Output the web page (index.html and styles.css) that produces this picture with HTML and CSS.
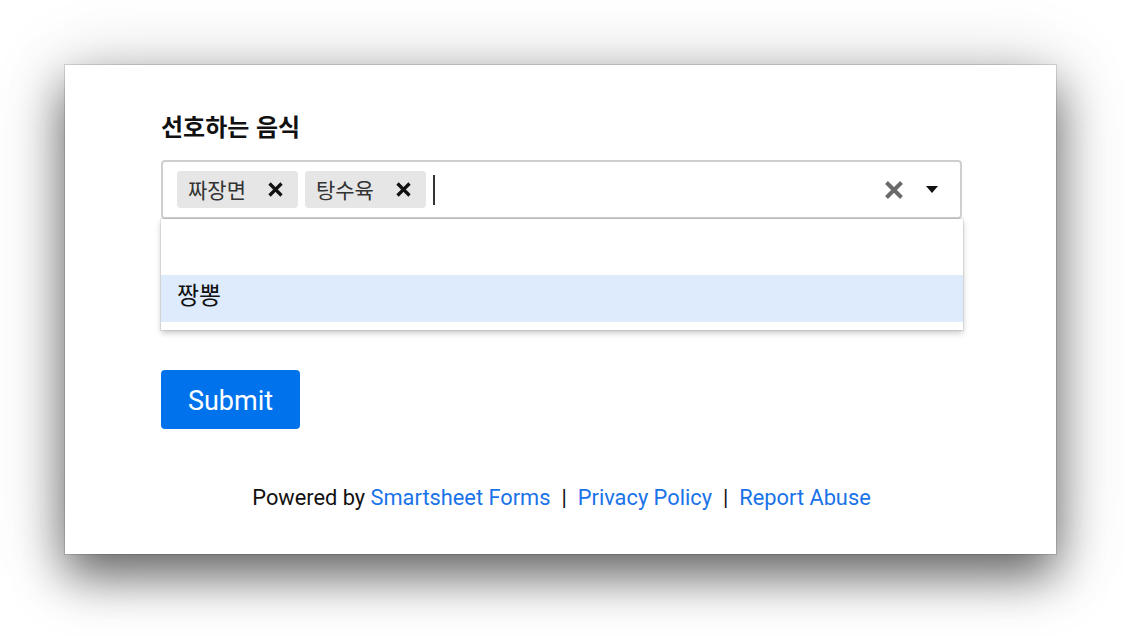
FILE: index.html
```html
<!DOCTYPE html>
<html lang="ko">
<head>
<meta charset="utf-8">
<link rel="stylesheet" href="styles.css">
</head>
<body>
<div class="window">
  <form class="form">
    <label class="label">선호하는 음식</label>
    <div class="select-wrap">
      <div class="select">
        <div class="values">
          <span class="chip"><span class="chip-text">짜장면</span><span class="chip-x">
            <svg width="15" height="15" viewBox="0 0 15 15"><path d="M1.5 1.5L13.5 13.5M13.5 1.5L1.5 13.5" stroke="#111" stroke-width="3.2"/></svg>
          </span></span>
          <span class="chip"><span class="chip-text">탕수육</span><span class="chip-x">
            <svg width="15" height="15" viewBox="0 0 15 15"><path d="M1.5 1.5L13.5 13.5M13.5 1.5L1.5 13.5" stroke="#111" stroke-width="3.2"/></svg>
          </span></span>
          <span class="caret"></span>
        </div>
        <div class="indicators">
          <svg class="clear" width="20" height="20" viewBox="0 0 20 20"><path d="M2.5 2.5L17.5 17.5M17.5 2.5L2.5 17.5" stroke="#6a6a6a" stroke-width="4"/></svg>
          <svg class="arrow" width="12" height="8" viewBox="0 0 12 8"><path d="M0 0H12L6 7Z" fill="#111"/></svg>
        </div>
      </div>
      <div class="menu">
        <div class="option empty"></div>
        <div class="option focused">짱뽕</div>
      </div>
    </div>
    <button type="button" class="submit">Submit</button>
    <p class="footer">Powered by <a href="#">Smartsheet Forms</a><span class="sep">|</span><a href="#">Privacy Policy</a><span class="sep">|</span><a href="#">Report Abuse</a></p>
  </form>
</div>
</body>
</html>
```
FILE: styles.css
```css
html, body {
  margin: 0;
  padding: 0;
  background: #ffffff;
}
body {
  width: 1138px;
  height: 636px;
  overflow: hidden;
  padding-top: 65px;
  box-sizing: border-box;
  font-family: Roboto, "Noto Sans CJK KR", sans-serif;
}
.window {
  margin-left: 65px;
  width: 991px;
  height: 489px;
  background: #fff;
  box-sizing: border-box;
  box-shadow: 0 22px 45px rgba(0,0,0,0.55), 0 4px 70px rgba(0,0,0,0.18), 0 0 0 1px rgba(0,0,0,0.12);
  padding: 46px 94px 0 96px;
}
.form {
  display: flex;
  flex-direction: column;
  margin: 0;
}
.label {
  font-family: "Noto Sans CJK KR", sans-serif;
  font-weight: 700;
  font-size: 24px;
  line-height: 30px;
  color: #111;
  margin-bottom: 19px;
}
.select-wrap {
  position: relative;
}
.select {
  height: 59px;
  box-sizing: border-box;
  border: 2px solid #cfcfcf;
  border-radius: 4px;
  display: flex;
  align-items: center;
  padding: 0 14px;
}
.values {
  flex: 1;
  display: flex;
  align-items: center;
  gap: 7px;
}
.chip {
  display: inline-flex;
  align-items: center;
  height: 37px;
  background: #e6e6e6;
  border-radius: 4px;
  padding: 0 15px 0 11px;
  font-family: "Noto Sans CJK KR", sans-serif;
  font-size: 21px;
  color: #333;
}
.chip-text {
  line-height: 37px;
  margin-right: 22px;
}
.chip-x {
  display: flex;
  align-items: center;
}
.caret {
  width: 2px;
  height: 30px;
  background: #333;
}
.indicators {
  display: flex;
  align-items: center;
  gap: 22px;
  padding-right: 8px;
}
.clear { display: block; }
.arrow { display: block; margin-top: 1px; }
.menu {
  position: absolute;
  left: 0;
  right: -1px;
  top: 59px;
  background: #fff;
  box-shadow: 0 0 0 1px rgba(0,0,0,0.08), 0 3px 6px rgba(0,0,0,0.22);
  padding-bottom: 8px;
}
.option {
  font-family: "Noto Sans CJK KR", sans-serif;
  font-size: 24px;
  color: #111;
  padding: 0 16px;
}
.option.empty {
  height: 56px;
}
.option.focused {
  height: 47px;
  line-height: 38px;
  background: #deebfd;
}
.submit {
  align-self: flex-start;
  margin-top: 151px;
  width: 139px;
  height: 59px;
  background: #0073ec;
  color: #fff;
  border: none;
  border-radius: 4px;
  font-family: Roboto, "Liberation Sans", sans-serif;
  font-size: 27px;
  padding: 0;
  padding-top: 2px;
}
.footer {
  margin: 57px 0 0 0;
  text-align: center;
  font-size: 21.8px;
  line-height: 24px;
  color: #111;
}
.footer a {
  color: #1a73e8;
  text-decoration: none;
}
.sep {
  margin: 0 11px;
  color: #111;
}
```
